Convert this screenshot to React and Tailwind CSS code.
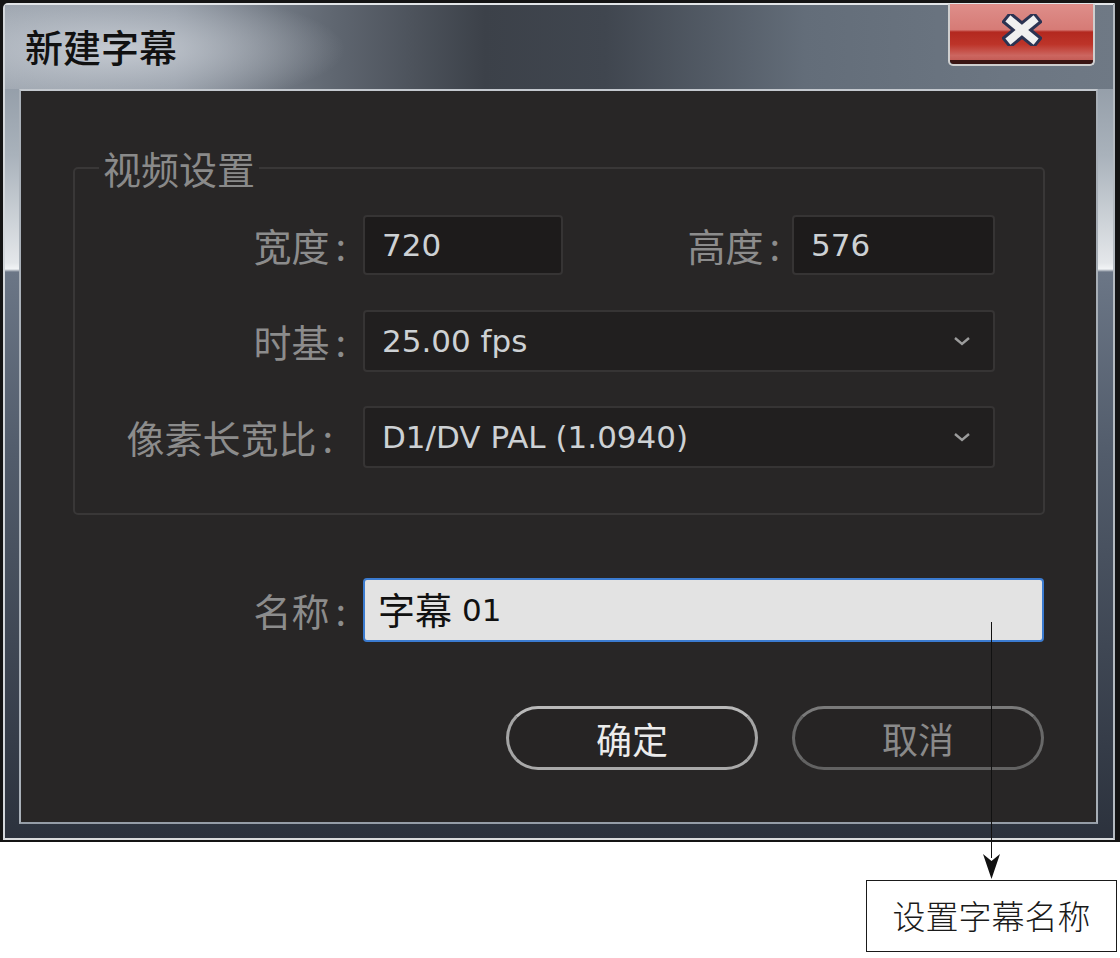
import { useState } from 'react'

const cjk = "font-['Noto_Sans_CJK_SC',sans-serif]"
const latin = "font-['DejaVu_Sans','Noto_Sans_CJK_SC',sans-serif]"

function Chevron() {
  return (
    <svg width="18" height="10" viewBox="0 0 18 10" className="shrink-0">
      <polyline points="2,2 9,8 16,2" fill="none" stroke="#9c9c9c" strokeWidth="2.4" />
    </svg>
  )
}

function Label({ text, className = '' }) {
  return (
    <div className={`${cjk} text-[38px] leading-none text-[#8c8c8c] text-right ${className}`}>
      {text}<span className="ml-[6px]">:</span>
    </div>
  )
}

function Field({ value, className = '' }) {
  return (
    <div className={`${latin} flex items-center pl-[17px] bg-[#1d1b1b] border-2 border-[#363434] rounded-[4px] text-[31px] text-[#cdd1d4] ${className}`}>
      {value}
    </div>
  )
}

function Select({ value, className = '' }) {
  return (
    <div className={`${latin} flex items-center justify-between pl-[17px] pr-[22px] bg-[#211f1f] border-2 border-[#363434] rounded-[4px] text-[31px] text-[#cdd1d4] ${className}`}>
      <span>{value}</span>
      <Chevron />
    </div>
  )
}

export default function App() {
  const [name, setName] = useState('01')

  return (
    <div className="relative w-[1120px] h-[958px] bg-white overflow-hidden">
      {/* dialog window */}
      <div className="h-[842px] bg-[#141414] pt-[3px] pl-[3px]">
        <div className="w-[1112px] h-[837px] flex flex-col border-2 border-t-[#e2e5e8] border-l-[#d3d7db] border-r-[#b4bac0] border-b-[#d9dbdd] rounded-tl-[5px] bg-[linear-gradient(to_bottom,#7d8794_0px,#a9b2bb_150px,#e4e7ea_258px,#f2f4f6_264px,#6b7686_267px,#525c6b_450px,#2c323d_100%)]">
          {/* title bar */}
          <div className="h-[84px] shrink-0 flex justify-between bg-[image:radial-gradient(ellipse_230px_60px_at_110px_44px,rgba(205,210,217,0.85),rgba(205,210,217,0)),linear-gradient(to_right,#9aa2ac_0px,#8f97a2_170px,#5f6670_330px,#3c4149_480px,#40464f_600px,#636d79_800px,#6c7682_1000px,#6f7985_1110px)]">
            <div className={`${cjk} pl-[20px] pt-[21px] text-[38px] leading-[40px] font-medium text-[#111]`}>新建字幕</div>
            <button className="mt-[-1px] mr-[18px] w-[147px] h-[62px] border-2 border-t-0 border-[#cfcfcf] rounded-b-[5px] overflow-hidden">
              <div className="h-full flex items-start justify-center pt-[10px] border-b-[4px] border-[#3a1513] rounded-b-[3px] bg-[linear-gradient(to_bottom,#de8e8a_0%,#d67b76_46%,#b3281f_50%,#bd3429_72%,#cc6660_92%,#c45c56_100%)]">
                <svg width="40" height="32" viewBox="0 0 40 32">
                  <g strokeLinecap="square">
                    <line x1="9" y1="7" x2="31" y2="25" stroke="#2b3352" strokeWidth="14" />
                    <line x1="31" y1="7" x2="9" y2="25" stroke="#2b3352" strokeWidth="14" />
                    <line x1="9" y1="7" x2="31" y2="25" stroke="#f0f0f0" strokeWidth="8" />
                    <line x1="31" y1="7" x2="9" y2="25" stroke="#f0f0f0" strokeWidth="8" />
                  </g>
                </svg>
              </div>
            </button>
          </div>

          {/* panel */}
          <div className="flex-1 ml-[14px] mr-[15px] mb-[14px] flex flex-col bg-[#282626] border-2 border-t-[#c3c8ce] border-l-[#aab1b9] border-r-[#a7aeb6] border-b-[#959da7]">
            <fieldset className="mt-[57px] ml-[52px] mr-[51px] border-2 border-[#393737] rounded-[5px] pb-[45px]">
              <legend className={`${cjk} ml-[24px] px-[4px] text-[38px] leading-[40px] text-[#8a8a8a]`}>视频设置</legend>

              <div className="mt-[27px] flex items-center">
                <Label text="宽度" className="w-[271px] mr-[17px]" />
                <Field value="720" className="w-[200px] h-[60px]" />
                <Label text="高度" className="w-[217px] mr-[12px]" />
                <Field value="576" className="w-[203px] h-[60px]" />
              </div>

              <div className="mt-[35px] flex items-center">
                <Label text="时基" className="w-[271px] mr-[17px]" />
                <Select value="25.00 fps" className="w-[632px] h-[62px]" />
              </div>

              <div className="mt-[34px] flex items-center">
                <Label text="像素长宽比" className="w-[258px] mr-[30px]" />
                <Select value="D1/DV PAL (1.0940)" className="w-[632px] h-[62px]" />
              </div>
            </fieldset>

            <div className="mt-[63px] pl-[54px] flex items-center">
              <Label text="名称" className="w-[271px] mr-[17px]" />
              <div className={`${latin} w-[681px] h-[64px] flex items-center pl-[13px] bg-[#e3e3e3] border-2 border-[#3b7bd0] rounded-[4px] text-[#111]`}>
                <span className={`${cjk} text-[37px]`}>字幕</span>
                <input
                  value={name}
                  onChange={e => setName(e.target.value)}
                  className="ml-[10px] w-[200px] bg-transparent outline-none text-[31px] text-[#111]"
                />
              </div>
            </div>

            <div className="mt-[64px] pr-[52px] flex justify-end gap-[34px]">
              <button className={`${cjk} w-[252px] h-[64px] rounded-full border-[3px] border-t-[#b9b9b9] border-x-[#a4a4a4] border-b-[#a9a9a9] bg-[#262424] text-[36px] text-[#ececec]`}>
                确定
              </button>
              <button className={`${cjk} w-[252px] h-[64px] rounded-full border-[3px] border-t-[#7a7a7a] border-x-[#686868] border-b-[#626262] bg-[#262424] text-[36px] text-[#8a8a8a]`}>
                取消
              </button>
            </div>
          </div>
        </div>
      </div>

      {/* callout */}
      <div className="mt-[38px] ml-[866px] w-[251px] h-[72px] flex items-center justify-center border-[1.5px] border-[#1a1a1a]">
        <span className={`${cjk} font-light text-[33px] text-[#1a1a1a]`}>设置字幕名称</span>
      </div>
      <div className="absolute left-[991px] top-[622px] w-px h-[236px] bg-[#111]" />
      <svg className="absolute left-[983px] top-[854px]" width="17" height="26" viewBox="0 0 17 26">
        <polygon points="0,0 8.5,7 17,0 8.5,25" fill="#111" />
      </svg>
    </div>
  )
}
